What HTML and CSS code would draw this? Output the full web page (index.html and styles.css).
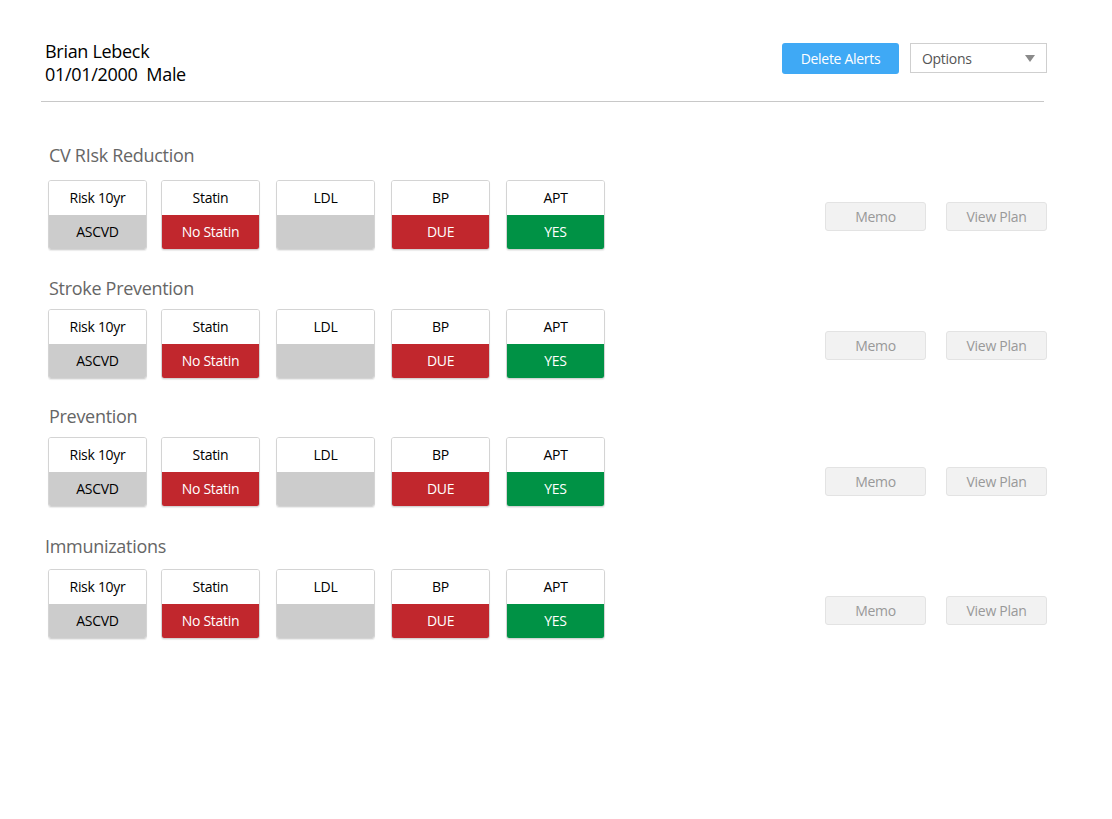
FILE: index.html
```html
<!DOCTYPE html>
<html>
<head>
<meta charset="utf-8">
<link rel="stylesheet" href="styles.css">
</head>
<body>
<div class="page">
  <header class="header">
    <div class="patient">
      <div class="patient-name">Brian Lebeck</div>
      <div class="patient-meta">01/01/2000&nbsp; Male</div>
    </div>
    <div class="header-actions">
      <button class="btn-primary">Delete Alerts</button>
      <div class="select">
        <span>Options</span>
        <svg class="caret" width="10" height="7" viewBox="0 0 10 7"><path d="M0 0H10L5 7Z" fill="#8a8a8a"/></svg>
      </div>
    </div>
  </header>

  <section class="section s1">
    <h2 class="section-title">CV RIsk Reduction</h2>
    <div class="row">
      <div class="cards">
        <div class="card"><div class="card-top">Risk 10yr</div><div class="card-bottom grey">ASCVD</div></div>
        <div class="card"><div class="card-top">Statin</div><div class="card-bottom red">No Statin</div></div>
        <div class="card"><div class="card-top">LDL</div><div class="card-bottom grey"></div></div>
        <div class="card"><div class="card-top">BP</div><div class="card-bottom red">DUE</div></div>
        <div class="card"><div class="card-top">APT</div><div class="card-bottom green">YES</div></div>
      </div>
      <div class="actions">
        <button class="btn-ghost">Memo</button>
        <button class="btn-ghost">View Plan</button>
      </div>
    </div>
  </section>

  <section class="section s2">
    <h2 class="section-title">Stroke Prevention</h2>
    <div class="row">
      <div class="cards">
        <div class="card"><div class="card-top">Risk 10yr</div><div class="card-bottom grey">ASCVD</div></div>
        <div class="card"><div class="card-top">Statin</div><div class="card-bottom red">No Statin</div></div>
        <div class="card"><div class="card-top">LDL</div><div class="card-bottom grey"></div></div>
        <div class="card"><div class="card-top">BP</div><div class="card-bottom red">DUE</div></div>
        <div class="card"><div class="card-top">APT</div><div class="card-bottom green">YES</div></div>
      </div>
      <div class="actions">
        <button class="btn-ghost">Memo</button>
        <button class="btn-ghost">View Plan</button>
      </div>
    </div>
  </section>

  <section class="section s3">
    <h2 class="section-title">Prevention</h2>
    <div class="row">
      <div class="cards">
        <div class="card"><div class="card-top">Risk 10yr</div><div class="card-bottom grey">ASCVD</div></div>
        <div class="card"><div class="card-top">Statin</div><div class="card-bottom red">No Statin</div></div>
        <div class="card"><div class="card-top">LDL</div><div class="card-bottom grey"></div></div>
        <div class="card"><div class="card-top">BP</div><div class="card-bottom red">DUE</div></div>
        <div class="card"><div class="card-top">APT</div><div class="card-bottom green">YES</div></div>
      </div>
      <div class="actions">
        <button class="btn-ghost">Memo</button>
        <button class="btn-ghost">View Plan</button>
      </div>
    </div>
  </section>

  <section class="section s4">
    <h2 class="section-title">Immunizations</h2>
    <div class="row">
      <div class="cards">
        <div class="card"><div class="card-top">Risk 10yr</div><div class="card-bottom grey">ASCVD</div></div>
        <div class="card"><div class="card-top">Statin</div><div class="card-bottom red">No Statin</div></div>
        <div class="card"><div class="card-top">LDL</div><div class="card-bottom grey"></div></div>
        <div class="card"><div class="card-top">BP</div><div class="card-bottom red">DUE</div></div>
        <div class="card"><div class="card-top">APT</div><div class="card-bottom green">YES</div></div>
      </div>
      <div class="actions">
        <button class="btn-ghost">Memo</button>
        <button class="btn-ghost">View Plan</button>
      </div>
    </div>
  </section>
</div>
</body>
</html>
```

FILE: styles.css
```css
* { box-sizing: border-box; }
html, body { margin: 0; padding: 0; background: #fff; }
body {
  font-family: "Open Sans", "Noto Sans", "Liberation Sans", sans-serif;
  color: #000;
  width: 1112px;
  height: 819px;
  overflow: hidden;
}
.page { padding: 40px 0 0 0; }

.header {
  display: flex;
  justify-content: space-between;
  align-items: flex-start;
  margin: 0 68px 0 41px;
  padding: 0 0 0 4px;
  height: 62px;
  border-bottom: 1px solid #c8c8c8;
}
.patient-name, .patient-meta {
  font-size: 18px;
  line-height: 23px;
  letter-spacing: -0.3px;
}
.header-actions {
  display: flex;
  gap: 11px;
  margin-top: 3px;
  margin-right: -3px;
}
.btn-primary {
  width: 117px;
  height: 31px;
  border: none;
  border-radius: 3px;
  background: #3fa9f5;
  color: #fff;
  font-family: inherit;
  font-size: 14px;
  letter-spacing: -0.3px;
  padding: 0;
}
.select {
  width: 137px;
  height: 30px;
  border: 1px solid #cfcfcf;
  display: flex;
  align-items: center;
  justify-content: space-between;
  padding: 0 11px 0 11px;
  font-size: 14px;
  color: #555;
  letter-spacing: -0.3px;
}
.caret { margin-top: 1px; }

.section { padding-left: 48px; }
.section-title {
  margin: 0;
  font-weight: normal;
  font-size: 18px;
  line-height: 26px;
  color: #666;
  letter-spacing: -0.3px;
  padding-left: 1px;
}
.s1 { margin-top: 40px; }
.s2 { margin-top: 25px; }
.s3 { margin-top: 24px; }
.s4 { margin-top: 26px; }
.s4 .section-title { margin-left: -4px; }
.s1 .section-title { margin-bottom: 12px; }
.s2 .section-title { margin-bottom: 8px; }
.s3 .section-title { margin-bottom: 8px; }
.s4 .section-title { margin-bottom: 10px; }

.row {
  display: flex;
  align-items: center;
}
.cards {
  display: flex;
  gap: 16px;
}
.card {
  width: 99px;
  height: 70px;
  border: 1px solid #d4d4d4;
  border-radius: 3px;
  overflow: hidden;
  display: flex;
  flex-direction: column;
  box-shadow: 0 1px 1px rgba(0,0,0,0.08);
}
.card:first-child { margin-right: -2px; }
.card-top, .card-bottom {
  height: 35px;
  display: flex;
  align-items: center;
  justify-content: center;
  font-size: 14px;
  letter-spacing: -0.3px;
}
.card-top { background: #fff; color: #000; height: 34px; }
.card-bottom.grey { background: #cccccc; color: #000; }
.card-bottom.red { background: #c1272d; color: #fff; }
.card-bottom.green { background: #009245; color: #fff; }

.actions {
  display: flex;
  gap: 20px;
  margin-left: auto;
  margin-right: 65px;
  margin-top: 2px;
}
.s3 .actions { margin-top: 18px; }
.s4 .actions { margin-top: 12px; }
.btn-ghost {
  width: 101px;
  height: 29px;
  border: 1px solid #e3e3e3;
  border-radius: 3px;
  background: #f2f2f2;
  color: #999;
  font-family: inherit;
  font-size: 14px;
  letter-spacing: -0.3px;
  padding: 0;
}
```
